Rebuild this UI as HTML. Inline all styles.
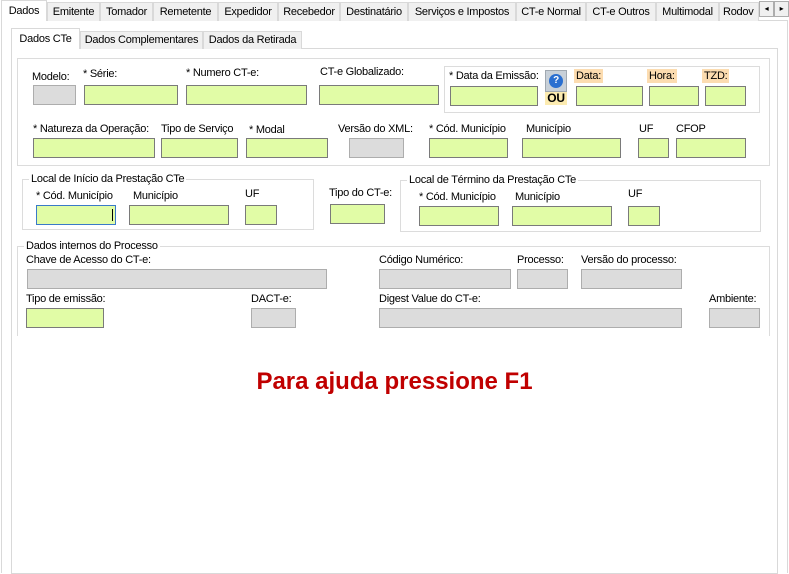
<!DOCTYPE html>
<html><head><meta charset="utf-8"><style>
*{box-sizing:border-box;margin:0;padding:0}
body{width:789px;height:573px;background:#fff;position:relative;overflow:hidden;font-family:"Liberation Sans",sans-serif;font-size:11px;letter-spacing:-0.25px;color:#000}
.a{position:absolute;white-space:nowrap}
.t{position:absolute;top:2px;height:19px;background:#f0f0f0;border:1px solid #d9d9d9;border-bottom:none;text-align:center;line-height:18px;font-size:11px}
.it{position:absolute;top:31px;height:18px;background:#f0f0f0;border:1px solid #d9d9d9;border-bottom:none;text-align:center;line-height:17px;font-size:11px}
.g{position:absolute;height:20px;background:#e1fca6;border:1px solid #7a7a7a}
.d{position:absolute;height:20px;background:#dcdcdc;border:1px solid #adadad}
.box{position:absolute;border:1px solid #dcdcdc}
.lg{position:absolute;background:#fff;padding:0 2px;font-size:11px;white-space:nowrap}
.or{position:absolute;background:#fcdcb0;padding:0 2px;height:14px;line-height:14px}
</style></head><body>
<div class="a" style="left:1px;top:20px;width:787px;height:553px;border:1px solid #d9d9d9;border-bottom:none"></div>
<div class="t" style="left:47px;width:53px">Emitente</div>
<div class="t" style="left:100px;width:53px">Tomador</div>
<div class="t" style="left:153px;width:65px">Remetente</div>
<div class="t" style="left:218px;width:60px">Expedidor</div>
<div class="t" style="left:278px;width:62px">Recebedor</div>
<div class="t" style="left:340px;width:68px">Destinatário</div>
<div class="t" style="left:408px;width:108px">Serviços e Impostos</div>
<div class="t" style="left:516px;width:70px">CT-e Normal</div>
<div class="t" style="left:586px;width:70px">CT-e Outros</div>
<div class="t" style="left:656px;width:63px">Multimodal</div>
<div class="t" style="left:719px;width:40px;text-align:left;padding-left:3px;overflow:hidden">Rodov</div>
<div class="t" style="left:759px;width:15px;top:1px;height:16px;border:1px solid #adadad;line-height:14px;font-size:8px">◂</div>
<div class="t" style="left:774px;width:15px;top:1px;height:16px;border:1px solid #adadad;line-height:14px;font-size:8px">▸</div>
<div class="a" style="left:1px;top:0;width:46px;height:21px;background:#fff;border:1px solid #d9d9d9;border-bottom:none;text-align:center;line-height:20px">Dados</div>
<div class="a" style="left:11px;top:48px;width:767px;height:526px;border:1px solid #d9d9d9"></div>
<div class="it" style="left:80px;width:123px">Dados Complementares</div>
<div class="it" style="left:203px;width:99px">Dados da Retirada</div>
<div class="a" style="left:11px;top:28px;width:69px;height:21px;background:#fff;border:1px solid #d9d9d9;border-bottom:none;text-align:center;line-height:20px">Dados CTe</div>

<div class="box" style="left:17px;top:58px;width:753px;height:108px"></div>
<div class="a" style="left:32px;top:71px">Modelo:</div>
<div class="d" style="left:33px;top:85px;width:43px"></div>
<div class="a" style="left:83px;top:68px">* Série:</div>
<div class="g" style="left:84px;top:85px;width:94px"></div>
<div class="a" style="left:186px;top:67px">* Numero CT-e:</div>
<div class="g" style="left:186px;top:85px;width:121px"></div>
<div class="a" style="left:320px;top:66px">CT-e Globalizado:</div>
<div class="g" style="left:319px;top:85px;width:120px"></div>
<div class="box" style="left:444px;top:66px;width:316px;height:47px"></div>
<div class="a" style="left:449px;top:70px">* Data da Emissão:</div>
<div class="g" style="left:450px;top:86px;width:88px"></div>
<div class="a" style="left:545px;top:70px;width:22px;height:22px;background:#c8d0d8;border:1px solid #a0a8b0"><div style="position:absolute;left:3px;top:3px;width:14px;height:14px;border-radius:50%;background:#2a6fd0;color:#fff;font-weight:bold;font-size:10px;text-align:center;line-height:14px">?</div></div>
<div class="a" style="left:545px;top:92px;width:22px;height:13px;background:#fcebb0;font-weight:bold;font-size:12px;text-align:center;line-height:13px">OU</div>
<div class="or" style="left:574px;top:69px">Data:</div>
<div class="g" style="left:576px;top:86px;width:67px"></div>
<div class="or" style="left:647px;top:69px">Hora:</div>
<div class="g" style="left:649px;top:86px;width:50px"></div>
<div class="or" style="left:702px;top:69px">TZD:</div>
<div class="g" style="left:705px;top:86px;width:41px"></div>

<div class="a" style="left:33px;top:123px">* Natureza da Operação:</div>
<div class="g" style="left:33px;top:138px;width:122px"></div>
<div class="a" style="left:161px;top:123px">Tipo de Serviço</div>
<div class="g" style="left:161px;top:138px;width:77px"></div>
<div class="a" style="left:249px;top:124px">* Modal</div>
<div class="g" style="left:246px;top:138px;width:82px"></div>
<div class="a" style="left:338px;top:123px">Versão do XML:</div>
<div class="d" style="left:349px;top:138px;width:55px"></div>
<div class="a" style="left:429px;top:123px">* Cód. Município</div>
<div class="g" style="left:429px;top:138px;width:79px"></div>
<div class="a" style="left:526px;top:123px">Município</div>
<div class="g" style="left:522px;top:138px;width:99px"></div>
<div class="a" style="left:639px;top:123px">UF</div>
<div class="g" style="left:638px;top:138px;width:31px"></div>
<div class="a" style="left:676px;top:123px">CFOP</div>
<div class="g" style="left:676px;top:138px;width:70px"></div>

<div class="box" style="left:22px;top:179px;width:292px;height:51px"></div>
<div class="lg" style="left:29px;top:173px">Local de Início da Prestação CTe</div>
<div class="a" style="left:36px;top:190px">* Cód. Município</div>
<div class="g" style="left:36px;top:205px;width:80px;border-color:#3a7ac8"><div style="position:absolute;right:2px;top:3px;width:1px;height:12px;background:#000"></div></div>
<div class="a" style="left:133px;top:190px">Município</div>
<div class="g" style="left:129px;top:205px;width:100px"></div>
<div class="a" style="left:245px;top:188px">UF</div>
<div class="g" style="left:245px;top:205px;width:32px"></div>
<div class="a" style="left:329px;top:187px">Tipo do CT-e:</div>
<div class="g" style="left:330px;top:204px;width:55px"></div>

<div class="box" style="left:400px;top:180px;width:361px;height:52px"></div>
<div class="lg" style="left:407px;top:174px">Local de Término da Prestação CTe</div>
<div class="a" style="left:419px;top:191px">* Cód. Município</div>
<div class="g" style="left:419px;top:206px;width:80px"></div>
<div class="a" style="left:515px;top:191px">Município</div>
<div class="g" style="left:512px;top:206px;width:100px"></div>
<div class="a" style="left:628px;top:188px">UF</div>
<div class="g" style="left:628px;top:206px;width:32px"></div>

<div class="a" style="left:17px;top:246px;width:753px;height:90px;border:1px solid #dcdcdc;border-bottom:none"></div>
<div class="lg" style="left:24px;top:240px">Dados internos do Processo</div>
<div class="a" style="left:26px;top:254px">Chave de Acesso do CT-e:</div>
<div class="d" style="left:27px;top:269px;width:300px"></div>
<div class="a" style="left:379px;top:254px">Código Numérico:</div>
<div class="d" style="left:379px;top:269px;width:132px"></div>
<div class="a" style="left:517px;top:254px">Processo:</div>
<div class="d" style="left:517px;top:269px;width:51px"></div>
<div class="a" style="left:581px;top:254px">Versão do processo:</div>
<div class="d" style="left:581px;top:269px;width:101px"></div>
<div class="a" style="left:26px;top:293px">Tipo de emissão:</div>
<div class="g" style="left:26px;top:308px;width:78px"></div>
<div class="a" style="left:251px;top:293px">DACT-e:</div>
<div class="d" style="left:251px;top:308px;width:45px"></div>
<div class="a" style="left:379px;top:293px">Digest Value do CT-e:</div>
<div class="d" style="left:379px;top:308px;width:303px"></div>
<div class="a" style="left:709px;top:293px">Ambiente:</div>
<div class="d" style="left:709px;top:308px;width:51px"></div>

<div class="a" style="left:0;width:789px;top:368px;text-align:center;color:#c00000;font-weight:bold;font-size:24px;letter-spacing:0">Para ajuda pressione F1</div>
</body></html>
